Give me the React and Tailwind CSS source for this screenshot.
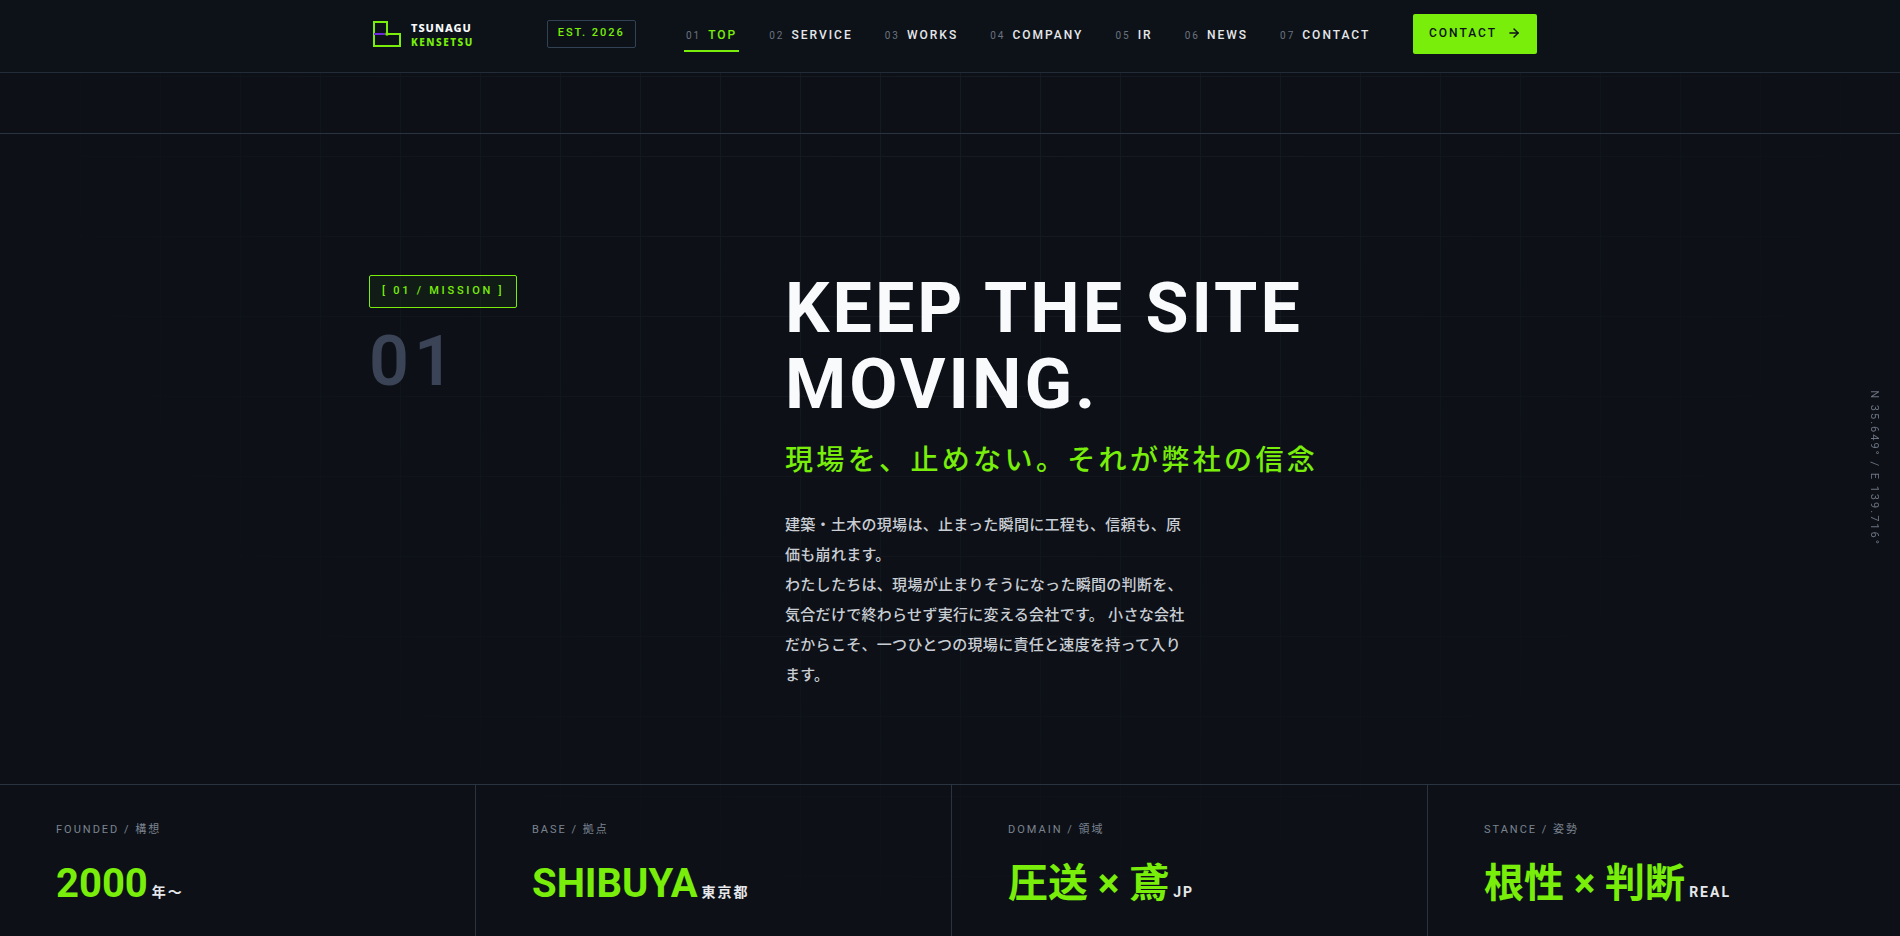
import { ArrowRight } from "lucide-react";

const navItems = [
  { no: "01", label: "TOP", active: true },
  { no: "02", label: "SERVICE" },
  { no: "03", label: "WORKS" },
  { no: "04", label: "COMPANY" },
  { no: "05", label: "IR" },
  { no: "06", label: "NEWS" },
  { no: "07", label: "CONTACT" },
];

const stats = [
  { label: "FOUNDED / 構想", value: "2000", unit: "年〜" },
  { label: "BASE / 拠点", value: "SHIBUYA", unit: "東京都" },
  { label: "DOMAIN / 領域", value: "圧送 × 鳶", unit: "JP" },
  { label: "STANCE / 姿勢", value: "根性 × 判断", unit: "REAL" },
];

function Logo() {
  return (
    <a href="#top" className="mb-1 flex items-center gap-2.5 pl-1">
      <svg className="h-7 w-7" viewBox="0 0 28 28" fill="none" strokeWidth="2">
        <path d="M1 2H14V14H27V26H1Z" stroke="#78ee0a" />
        <path d="M1 14H12" stroke="#6d28d9" />
        <circle cx="14" cy="14" r="1.8" fill="#78ee0a" />
      </svg>
      <span className="flex flex-col gap-1 font-['Noto_Sans','Noto_Sans_CJK_JP',sans-serif] leading-none">
        <span className="text-[11px] font-extrabold leading-[11px] tracking-[1px] text-slate-50">TSUNAGU</span>
        <span className="text-[10px] font-extrabold leading-[10px] tracking-[0.15em] text-[#78ee0a]">KENSETSU</span>
      </span>
    </a>
  );
}

function Header() {
  return (
    <header className="border-b border-[#232d39] bg-[#0d1218]">
      <div className="mx-auto flex h-[72px] max-w-[1174px] items-center pl-1.5">
        <Logo />
        <span className="mb-1 ml-[73px] rounded-xs border border-[#334155] px-2.5 pt-1 pb-1.5 text-[11px] leading-4 font-medium tracking-[2px] whitespace-nowrap text-[#78ee0a]">
          EST. 2026
        </span>
        <nav className="ml-12 flex gap-7">
          {navItems.map((item) => (
            <a
              key={item.no}
              href={`#${item.label.toLowerCase()}`}
              className={`flex items-baseline gap-[7px] border-b-2 px-0.5 pt-1.5 pb-1.5 leading-4 whitespace-nowrap ${
                item.active ? "border-[#78ee0a] text-[#78ee0a]" : "border-transparent text-[#e5e7eb]"
              }`}
            >
              <span className="text-[10px] tracking-[2px] text-[#6b7280]">{item.no}</span>
              <span className="text-[12px] font-medium tracking-[2px]">{item.label}</span>
            </a>
          ))}
        </nav>
        <button
          type="button"
          className="mb-1 ml-auto flex h-10 items-center gap-2.5 rounded-xs bg-[#78ee0a] px-4 pb-0.5 text-[12px] font-medium tracking-[2px] text-[#0d1117]"
        >
          CONTACT
          <ArrowRight size={14} strokeWidth={2.5} />
        </button>
      </div>
    </header>
  );
}

function Mission() {
  return (
    <section className="pt-[136px] pb-[94px]">
      <div className="mx-auto grid max-w-[1174px] grid-cols-[1fr_2fr] gap-10 pl-1.5">
        <div className="pt-[5px]">
          <span className="inline-block rounded-xs border border-[#78ee0a] bg-[#78ee0a]/5 px-3 pt-[7px] pb-2 text-[11px] leading-4 font-medium tracking-[0.25em] text-[#78ee0a]">
            [ 01 / MISSION ]
          </span>
          <p className="mt-[18px] text-[70px] leading-[70px] font-semibold tracking-[5px] text-[#3a4456]">01</p>
        </div>
        <div>
          <h1 className="text-[70px] leading-[76px] font-bold tracking-[3px] text-slate-50">
            KEEP THE SITE
            <br />
            MOVING.
          </h1>
          <p className="mt-[21px] text-[28px] leading-9 font-medium tracking-[0.12em] text-[#78ee0a]">
            現場を、止めない。それが弊社の信念
          </p>
          <p className="mt-[31px] max-w-[410px] text-[15px] leading-[30px] font-medium tracking-[0.02em] text-[#c9cdd4]">
            建築・土木の現場は、止まった瞬間に工程も、信頼も、原価も崩れます。
            <br />
            わたしたちは、現場が止まりそうになった瞬間の判断を、気合だけで終わらせず実行に変える会社です。 小さな会社だからこそ、一つひとつの現場に責任と速度を持って入ります。
          </p>
        </div>
      </div>
    </section>
  );
}

function Stats() {
  return (
    <section className="grid grid-cols-[119fr_119fr_119fr_118fr] border-t border-[#2a3441]">
      {stats.map((s) => (
        <div key={s.label} className="border-r border-[#2a3441] px-14 pt-[37px] pb-8 last:border-r-0">
          <p className="text-[11px] leading-4 tracking-[2px] text-[#7b8390]">{s.label}</p>
          <p className="mt-[25px] flex items-baseline gap-1 whitespace-nowrap">
            <span className="text-[40px] leading-[42px] font-bold text-[#78ee0a]">{s.value}</span>
            <span className="text-[14px] font-bold tracking-[2px] text-[#e5e7eb]">{s.unit}</span>
          </p>
        </div>
      ))}
    </section>
  );
}

export default function App() {
  return (
    <div
      lang="ja"
      className="min-h-screen overflow-x-hidden bg-[#0d1117] bg-[radial-gradient(ellipse_960px_960px_at_50%_0px,transparent_0%,#0d1117_100%),linear-gradient(#171c24_1px,transparent_1px),linear-gradient(90deg,#171c24_1px,transparent_1px)] bg-[size:auto,80px_80px,80px_80px] bg-[position:0_0,0_-4px,0_0] font-[Roboto,'Noto_Sans_CJK_JP',sans-serif]"
    >
      <Header />
      <div className="h-[61px] border-b border-[#2a3441]" />
      <Mission />
      <Stats />
      <aside className="fixed top-1/2 right-[18px] -translate-y-1/2 text-[11px] leading-4 tracking-[2px] whitespace-nowrap text-[#6b7280] [writing-mode:vertical-rl]">
        N 35.649° / E 139.716°
      </aside>
    </div>
  );
}
